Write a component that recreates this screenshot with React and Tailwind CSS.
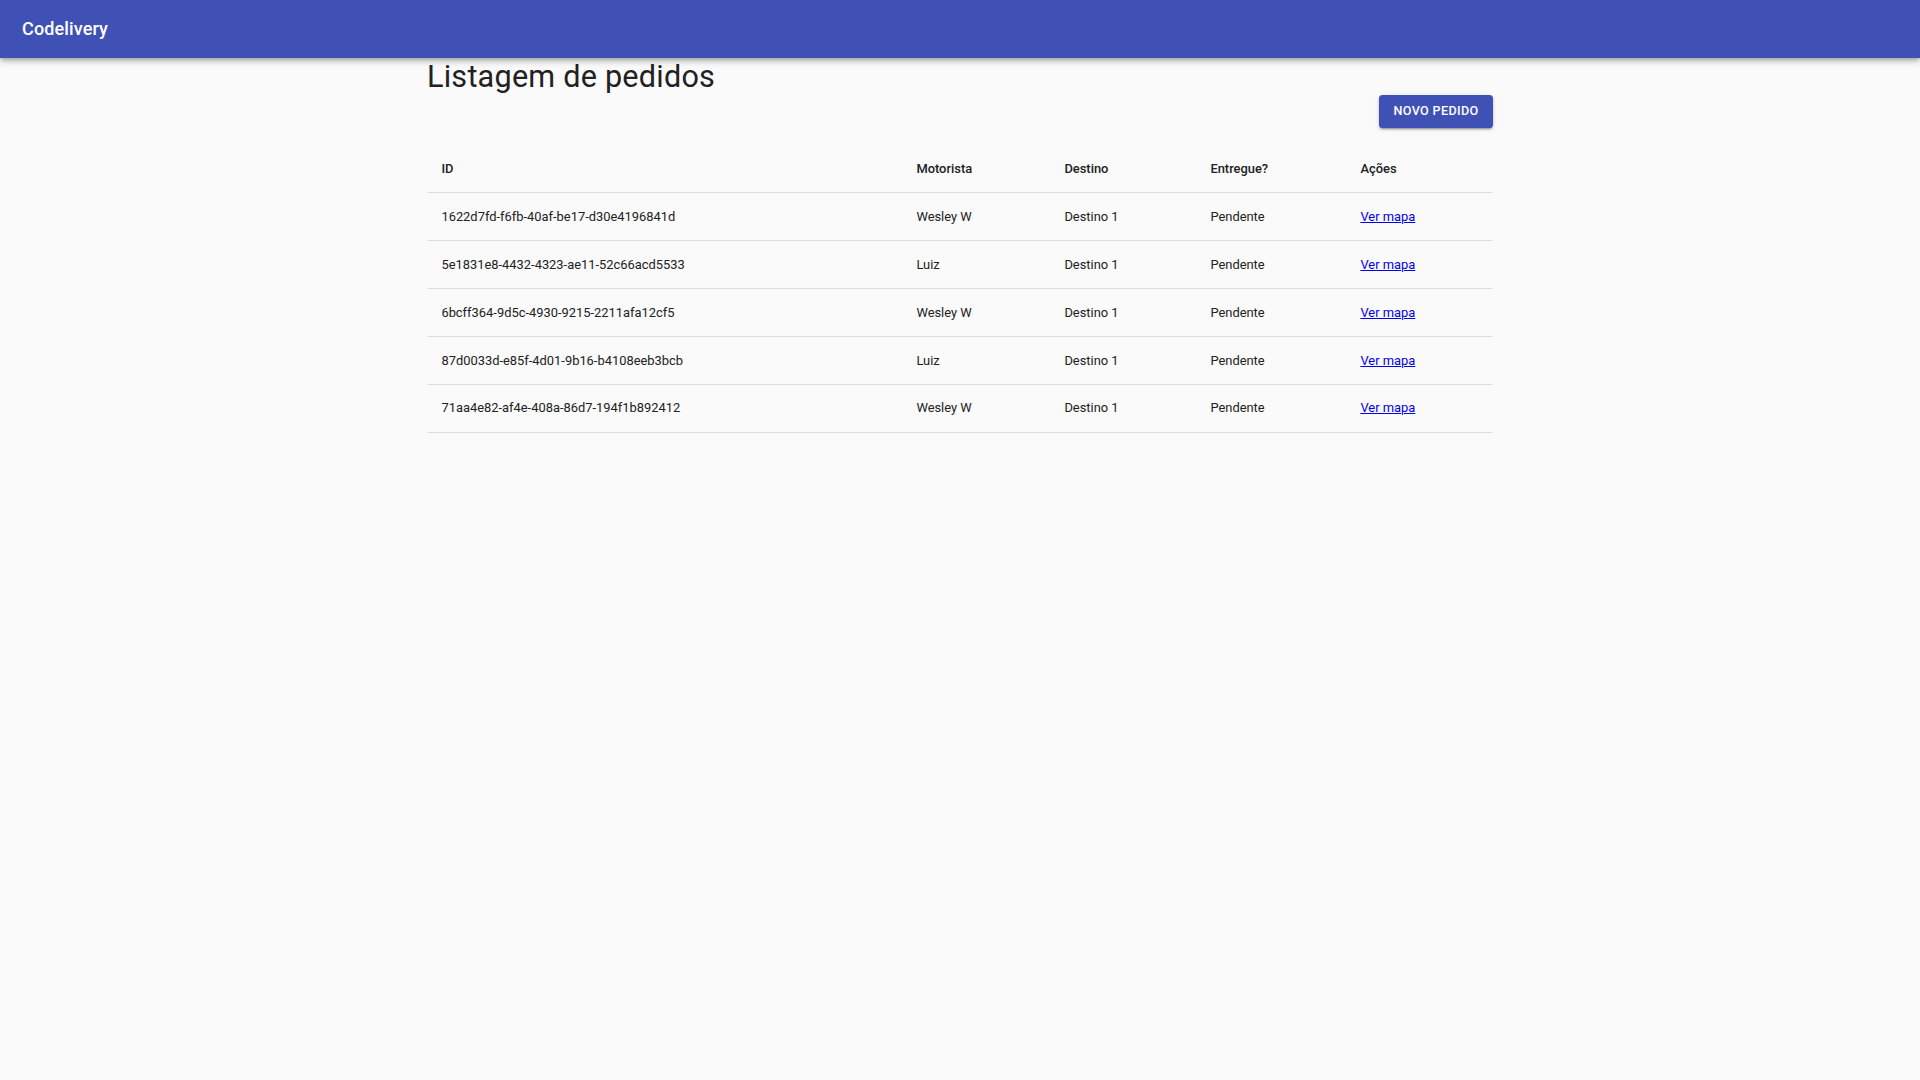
const pedidos = [
  { id: '1622d7fd-f6fb-40af-be17-d30e4196841d', motorista: 'Wesley W', destino: 'Destino 1', entregue: 'Pendente' },
  { id: '5e1831e8-4432-4323-ae11-52c66acd5533', motorista: 'Luiz', destino: 'Destino 1', entregue: 'Pendente' },
  { id: '6bcff364-9d5c-4930-9215-2211afa12cf5', motorista: 'Wesley W', destino: 'Destino 1', entregue: 'Pendente' },
  { id: '87d0033d-e85f-4d01-9b16-b4108eeb3bcb', motorista: 'Luiz', destino: 'Destino 1', entregue: 'Pendente' },
  { id: '71aa4e82-af4e-408a-86d7-194f1b892412', motorista: 'Wesley W', destino: 'Destino 1', entregue: 'Pendente' },
]

function App() {
  return (
    <div className="min-h-screen bg-[#fafafa] text-[#212121] font-['Roboto',sans-serif]">
      {/* App bar */}
      <header className="h-[58px] bg-[#3f51b5] flex items-center px-[22px] shadow-[0_2px_4px_-1px_rgba(0,0,0,0.2),0_4px_5px_0_rgba(0,0,0,0.14),0_1px_10px_0_rgba(0,0,0,0.12)] relative z-10">
        <h6 className="text-white text-[18px] font-medium leading-none tracking-[0.0075em]">Codelivery</h6>
      </header>

      <main className="w-[1066px] ml-[427px]">
        <h1 className="text-[30.6px] leading-[37px] h-[37px] font-normal tracking-[0.00735em]">Listagem de pedidos</h1>

        <div className="flex justify-end">
          <button className="h-[33px] px-[14.4px] rounded-[3.6px] bg-[#3f51b5] text-white text-[12.6px] font-medium uppercase tracking-[0.02857em] shadow-[0_3px_1px_-2px_rgba(0,0,0,0.2),0_2px_2px_0_rgba(0,0,0,0.14),0_1px_5px_0_rgba(0,0,0,0.12)]">
            Novo pedido
          </button>
        </div>

        <table className="mt-[17px] w-full table-fixed border-collapse text-[12.9px]">
          <thead>
            <tr className="h-[47.85px] border-b border-[#e0e0e0] text-left">
              <th className="w-[475px] px-[14.4px] font-medium">ID</th>
              <th className="w-[148px] px-[14.4px] font-medium">Motorista</th>
              <th className="w-[146px] px-[14.4px] font-medium">Destino</th>
              <th className="w-[150px] px-[14.4px] font-medium">Entregue?</th>
              <th className="px-[14.4px] font-medium">Ações</th>
            </tr>
          </thead>
          <tbody>
            {pedidos.map((p) => (
              <tr key={p.id} className="h-[47.85px] border-b border-[#e0e0e0]">
                <td className="px-[14.4px]">{p.id}</td>
                <td className="px-[14.4px]">{p.motorista}</td>
                <td className="px-[14.4px]">{p.destino}</td>
                <td className="px-[14.4px]">{p.entregue}</td>
                <td className="px-[14.4px]">
                  <a href="#" className="text-[#0000ee] underline">Ver mapa</a>
                </td>
              </tr>
            ))}
          </tbody>
        </table>
      </main>
    </div>
  )
}

export default App
